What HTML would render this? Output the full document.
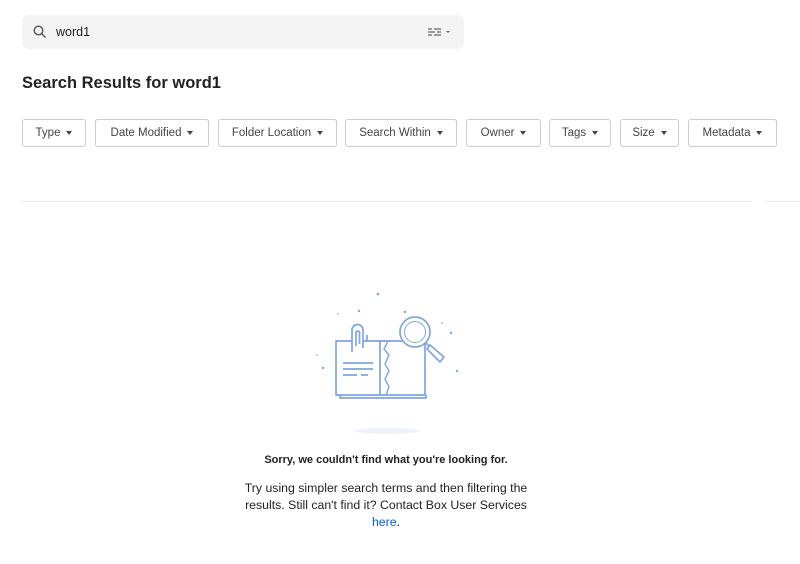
<html><head><style>
body{margin:0;width:800px;height:564px;background:#fff;font-family:"Liberation Sans",sans-serif;color:#222;position:relative;overflow:hidden}
.search{position:absolute;left:22px;top:15px;width:442px;height:34px;background:#f4f4f4;border-radius:6px}
.search span{position:absolute;left:34px;top:10px;font-size:12.5px;color:#222}
h1{position:absolute;left:22px;top:74px;margin:0;font-size:16.5px;font-weight:bold;color:#222}
.btn{position:absolute;top:119px;border:1px solid #ccc;border-radius:3px;font-size:11.5px;color:#444;display:flex;align-items:center;justify-content:center;box-sizing:border-box;height:28px}
.btn:after{content:"";border-left:3.5px solid transparent;border-right:3.5px solid transparent;border-top:4px solid #444;margin-left:6px}
.line{position:absolute;top:201px;height:1px;background:#e8e8e8}
.t{position:absolute;left:0;width:772px;text-align:center;font-size:12px;color:#222;line-height:17px}
</style></head><body>
<div class="search">
<svg style="position:absolute;left:11px;top:10px" width="14" height="14" viewBox="0 0 14 14"><circle cx="5.5" cy="5.5" r="4.3" fill="none" stroke="#555" stroke-width="1.4"/><path d="M8.7 8.7L12.5 12.5" stroke="#555" stroke-width="1.4"/></svg>
<span>word1</span>
<svg style="position:absolute;left:405px;top:12px" width="28" height="10" viewBox="0 0 28 10"><path d="M1 2h4M7 2h7M1 5h7M10 5h4M1 8h4M7 8h7" stroke="#666" stroke-width="1.2"/><path d="M19 4l2 2 2-2z" fill="#666"/></svg>
</div>
<h1>Search Results for word1</h1>
<div class="btn" style="left:22px;width:64px">Type</div>
<div class="btn" style="left:95px;width:114px">Date Modified</div>
<div class="btn" style="left:218px;width:119px">Folder Location</div>
<div class="btn" style="left:345px;width:112px">Search Within</div>
<div class="btn" style="left:466px;width:75px">Owner</div>
<div class="btn" style="left:549px;width:62px">Tags</div>
<div class="btn" style="left:620px;width:59px">Size</div>
<div class="btn" style="left:688px;width:89px">Metadata</div>
<div class="line" style="left:22px;width:730px"></div>
<div class="line" style="left:765px;width:35px"></div>
<svg style="position:absolute;left:300px;top:280px" width="180" height="160" viewBox="0 0 180 160" fill="none" stroke="#7fa6dd" stroke-width="1.7" stroke-linejoin="round">
<ellipse cx="87" cy="151" rx="33" ry="3" fill="#eef2f8" stroke="none"/>
<path d="M40 115l0 3h86v-3" />
<rect x="36" y="61" width="44" height="54" fill="#fff"/>
<path d="M80 61h45v54H80"/>
<path d="M80 61l8 0-4 8 5 6-4 9 4 7-4 8 4 8-3 8" stroke-width="1.4"/>
<path d="M52 72V50a5.5 5.5 0 0 1 11 0v18" fill="#fff"/>
<path d="M56 66V52a2 2 0 0 1 3.5 0v12"/>
<path d="M67 55v6"/>
<path d="M43 83h30M43 89h30M43 95h14M61 95h7"/>
<circle cx="115" cy="52" r="15" fill="#fff"/>
<circle cx="115" cy="52" r="10.5" stroke-width="1"/>
<path d="M126 63l4 4"/>
<path d="M130 65l14 12 -4 5 -13-13z" fill="#fff"/>
<g fill="#7fa6dd" stroke="none"><circle cx="78" cy="14" r="1.3"/><circle cx="59" cy="31" r="1.2"/><circle cx="105" cy="32" r="1.2"/><circle cx="38" cy="34" r="0.8"/><circle cx="142" cy="43" r="0.9"/><circle cx="151" cy="53" r="1.2"/><circle cx="17" cy="75" r="0.8"/><circle cx="23" cy="88" r="1.2"/><circle cx="157" cy="91" r="1.2"/></g>
</svg>
<div class="t" style="top:452px;font-weight:bold;font-size:11px">Sorry, we couldn't find what you're looking for.</div>
<div class="t" style="top:480px;font-size:12.3px">Try using simpler search terms and then filtering the<br>results. Still can't find it? Contact Box User Services<br><span style="color:#0061d5">here</span>.</div>
</body></html>
